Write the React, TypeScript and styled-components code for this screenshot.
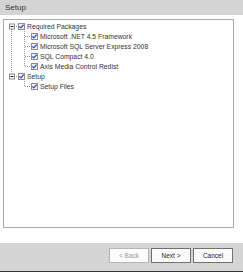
import React from "react";
import styled, { createGlobalStyle } from "styled-components";

const GlobalStyle = createGlobalStyle`
  html, body {
    margin: 0;
    padding: 0;
    background: #ffffff;
  }
  body {
    width: 243px;
    height: 272px;
    overflow: hidden;
    font-family: "Liberation Sans", Arial, sans-serif;
  }
`;

const Page = styled.div`
  width: 243px;
  height: 272px;
  display: flex;
  flex-direction: column;
  background: #ffffff;
`;

const Header = styled.div`
  height: 15px;
  flex-shrink: 0;
  background: #d4d4d4;
  display: flex;
  align-items: center;
  padding-left: 5px;
  font-size: 8px;
  color: #333333;
`;

const Body = styled.div`
  flex: 1;
  display: flex;
  flex-direction: column;
  padding: 4px 9px 15px 3px;
`;

const TreeBox = styled.div`
  flex: 1;
  border: 1px solid #a9a9a9;
  padding: 1px 0 0 1px;
  display: flex;
  flex-direction: column;
`;

const Row = styled.div`
  height: 10px;
  display: flex;
  align-items: center;
  font-size: 6.8px;
  color: #333333;
  white-space: nowrap;
`;

const Cell = styled.span`
  width: 13px;
  height: 10px;
  flex-shrink: 0;
  display: block;
`;

const Check = styled.span`
  width: 5px;
  height: 5px;
  flex-shrink: 0;
  border: 1px solid #8c8c8c;
  background: linear-gradient(#eeeeee, #ffffff);
  display: flex;
  align-items: center;
  justify-content: center;
  margin-right: 2px;
  svg {
    display: block;
  }
`;

const Footer = styled.div`
  height: 23px;
  flex-shrink: 0;
  background: #d4d4d4;
  border-bottom: 1px solid #333333;
  display: flex;
  justify-content: flex-end;
  align-items: flex-start;
  gap: 2px;
  padding: 5px 10px 0 0;
`;

const Button = styled.button<{ $disabled?: boolean }>`
  width: 40px;
  height: 15px;
  margin: 0;
  padding: 0;
  border: 1px solid ${(p) => (p.$disabled ? "#b5b5b5" : "#707070")};
  background: #fbfbfb;
  font-family: "Liberation Sans", Arial, sans-serif;
  font-size: 6.5px;
  color: ${(p) => (p.$disabled ? "#9a9a9a" : "#222222")};
  display: flex;
  align-items: center;
  justify-content: center;
`;

type Guide = "pipe" | "tee" | "ell" | "blank" | "expFirst" | "expLast";

const DOT = "#9a9a9a";

const GuideCell: React.FC<{ kind: Guide }> = ({ kind }) => {
  const v = (y1: number, y2: number) => (
    <line x1={6.5} y1={y1} x2={6.5} y2={y2} stroke={DOT} strokeWidth={1} strokeDasharray="1 1" />
  );
  const h = (x1: number) => (
    <line x1={x1} y1={5.5} x2={13} y2={5.5} stroke={DOT} strokeWidth={1} strokeDasharray="1 1" />
  );
  return (
    <Cell>
      <svg width="13" height="10" viewBox="0 0 13 10">
        {kind === "pipe" && v(0, 10)}
        {kind === "tee" && (
          <>
            {v(0, 10)}
            {h(7)}
          </>
        )}
        {kind === "ell" && (
          <>
            {v(0, 6)}
            {h(7)}
          </>
        )}
        {(kind === "expFirst" || kind === "expLast") && (
          <>
            {kind === "expFirst" ? v(8, 10) : v(0, 3)}
            {h(9)}
            <rect x={4.5} y={3} width={5} height={5} fill="#ffffff" stroke="#8a8a8a" strokeWidth={1} />
            <line x1={5.5} y1={5.5} x2={8.5} y2={5.5} stroke="#1a1a1a" strokeWidth={1} />
          </>
        )}
      </svg>
    </Cell>
  );
};

const CheckBox: React.FC = () => (
  <Check>
    <svg width="5" height="5" viewBox="0 0 5 5">
      <path d="M0.4 2.4 L1.9 3.9 L4.6 0.7" fill="none" stroke="#2b4fc7" strokeWidth={1.3} />
    </svg>
  </Check>
);

const nodes: { guides: Guide[]; label: string }[] = [
  { guides: ["expFirst"], label: "Required Packages" },
  { guides: ["pipe", "tee"], label: "Microsoft .NET 4.5 Framework" },
  { guides: ["pipe", "tee"], label: "Microsoft SQL Server Express 2008" },
  { guides: ["pipe", "tee"], label: "SQL Compact 4.0" },
  { guides: ["pipe", "ell"], label: "Axis Media Control Redist" },
  { guides: ["expLast"], label: "Setup" },
  { guides: ["blank", "ell"], label: "Setup Files" },
];

export default function App() {
  return (
    <Page>
      <GlobalStyle />
      <Header>Setup</Header>
      <Body>
        <TreeBox>
          {nodes.map((n) => (
            <Row key={n.label}>
              {n.guides.map((g, i) => (
                <GuideCell key={i} kind={g} />
              ))}
              <CheckBox />
              <span>{n.label}</span>
            </Row>
          ))}
        </TreeBox>
      </Body>
      <Footer>
        <Button $disabled>&lt; Back</Button>
        <Button>Next &gt;</Button>
        <Button>Cancel</Button>
      </Footer>
    </Page>
  );
}
